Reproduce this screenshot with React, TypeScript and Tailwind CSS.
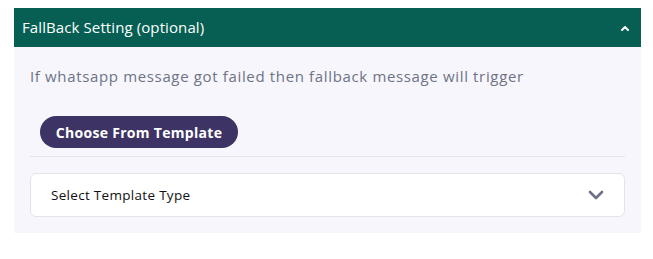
import React from "react";

export default function App() {
  return (
    <div className="w-[653px] h-[259px] bg-white pt-[8px] pl-[14px]" style={{ fontFamily: '"Open Sans", sans-serif' }}>
      <div className="w-[627px] bg-[#f6f6fc]">
        <div className="h-[39px] bg-[#065f52] flex items-center justify-between pl-[8px] pr-[10px]">
          <span className="text-white text-[15px] font-medium tracking-[0.1px]">FallBack Setting (optional)</span>
          <svg width="10" height="8" viewBox="0 0 10 8" className="mr-[1px]">
            <path d="M2 6 L5 3 L8 6" stroke="#ffffff" strokeWidth="2" fill="none" strokeLinecap="round" strokeLinejoin="round" />
          </svg>
        </div>
        <div className="px-[16px] pb-[16px]">
          <p className="text-[15px] text-[#6e7385] pt-[18px] leading-[22px] tracking-[0.65px]">If whatsapp message got failed then fallback message will trigger</p>
          <div className="pt-[29px] pl-[10px]">
            <button className="h-[32px] w-[198px] rounded-full bg-[#3d3465] text-white text-[14px] font-bold tracking-[0.3px]">Choose From Template</button>
          </div>
          <div className="mt-[8px] border-t border-[#e4e4ec]" />
          <div className="mt-[16px] h-[44px] bg-white border border-[#e3e3ea] rounded-[6px] flex items-center justify-between pl-[20px] pr-[20px]">
            <span className="text-[13.5px] font-medium text-[#111111] tracking-[0.3px] pt-[1px]">Select Template Type</span>
            <svg width="16" height="10" viewBox="0 0 16 10">
              <path d="M2 2 L8 8 L14 2" stroke="#6b7186" strokeWidth="2.6" fill="none" strokeLinecap="round" strokeLinejoin="round" />
            </svg>
          </div>
        </div>
      </div>
    </div>
  );
}
